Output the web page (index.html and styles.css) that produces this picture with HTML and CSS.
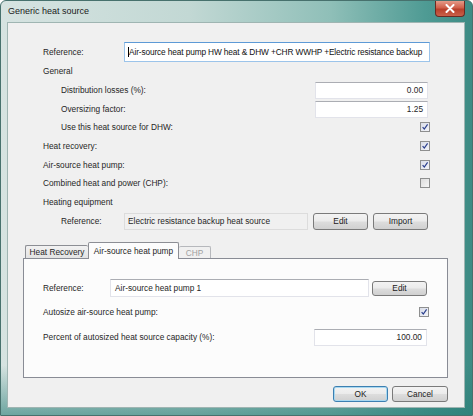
FILE: index.html
```html
<!DOCTYPE html>
<html>
<head>
<meta charset="utf-8">
<link rel="stylesheet" href="styles.css">
</head>
<body>
<div class="window">
  <div class="titlebar">
    <span class="title">Generic heat source</span>
    <div class="close"><svg width="10" height="9" viewBox="0 0 10 9"><path d="M1.5 1 L8.5 8 M8.5 1 L1.5 8" stroke="#fff" stroke-width="2" stroke-linecap="round"/></svg></div>
  </div>
  <div class="client">
    <div class="content">
      <div class="row r-ref">
        <span class="lbl lbl-ref">Reference:</span>
        <div class="input focus ref-input"><span class="caret"></span>Air-source heat pump HW heat &amp; DHW +CHR WWHP +Electric resistance backup</div>
      </div>
      <div class="row r18"><span>General</span></div>
      <div class="row r20 indent"><span>Distribution losses (%):</span><div class="input num">0.00</div></div>
      <div class="row r18 indent"><span>Oversizing factor:</span><div class="input num">1.25</div></div>
      <div class="row r18 indent"><span>Use this heat source for DHW:</span><span class="check on"><svg viewBox="0 0 8 8"><path d="M1.6 4.2 L3.3 6 L6.6 1.4" fill="none" stroke="#2b3f8e" stroke-width="1.2"/></svg></span></div>
      <div class="row r19"><span>Heat recovery:</span><span class="check on"><svg viewBox="0 0 8 8"><path d="M1.6 4.2 L3.3 6 L6.6 1.4" fill="none" stroke="#2b3f8e" stroke-width="1.2"/></svg></span></div>
      <div class="row r19"><span>Air-source heat pump:</span><span class="check on"><svg viewBox="0 0 8 8"><path d="M1.6 4.2 L3.3 6 L6.6 1.4" fill="none" stroke="#2b3f8e" stroke-width="1.2"/></svg></span></div>
      <div class="row r18"><span>Combined heat and power (CHP):</span><span class="check"></span></div>
      <div class="row r19"><span>Heating equipment</span></div>
      <div class="row r20 indent">
        <span class="lbl lbl-eq">Reference:</span>
        <div class="input readonly eq-box">Electric resistance backup heat source</div>
        <span class="btn">Edit</span>
        <span class="btn">Import</span>
      </div>
    </div>

    <div class="tabs">
      <div class="tabstrip">
        <span class="tab t-hr">Heat Recovery</span>
        <span class="tab active t-ash">Air-source heat pump</span>
        <span class="tab disabled t-chp">CHP</span>
      </div>
      <div class="pane">
        <div class="prow p-ref">
          <span class="lbl lbl-pref">Reference:</span>
          <div class="input pref-input">Air-source heat pump 1</div>
          <span class="btn">Edit</span>
        </div>
        <div class="prow p-auto"><span>Autosize air-source heat pump:</span><span class="check on"><svg viewBox="0 0 8 8"><path d="M1.6 4.2 L3.3 6 L6.6 1.4" fill="none" stroke="#2b3f8e" stroke-width="1.2"/></svg></span></div>
        <div class="prow p-pct"><span>Percent of autosized heat source capacity (%):</span><div class="input num">100.00</div></div>
      </div>
    </div>

    <div class="footer">
      <span class="btn default">OK</span>
      <span class="btn">Cancel</span>
    </div>
  </div>
</div>
</body>
</html>
```

FILE: styles.css
```css
html, body {
  margin: 0;
  padding: 0;
  background: #ffffff;
}
body {
  width: 473px;
  height: 416px;
  overflow: hidden;
  font-family: "Liberation Sans", Arial, sans-serif;
  font-size: 8.3px;
  color: #262626;
}
.window {
  box-sizing: border-box;
  width: 473px;
  height: 416px;
  display: flex;
  flex-direction: column;
  border: 1px solid #47716d;
  border-radius: 6px 6px 0 0;
  background:
    linear-gradient(to bottom, rgba(255,255,255,0) 88%, rgba(40,125,118,0.6) 100%),
    linear-gradient(to right, #d6e3e1 0%, #c2d8d4 40%, #8fbfb8 70%, #4f9b94 90%, #3d8b84 100%);
}
.titlebar {
  height: 21px;
  display: flex;
  justify-content: space-between;
  align-items: flex-start;
  flex: none;
}
.title {
  margin: 5px 0 0 7px;
  font-size: 9px;
  color: #1a1a1a;
  line-height: 11px;
}
.close {
  width: 30px;
  height: 16px;
  margin-right: 7px;
  border: 1px solid #6b2a22;
  border-top: none;
  border-radius: 0 0 4px 4px;
  background: linear-gradient(to bottom, #e49a88 0%, #d0604a 45%, #b8402b 55%, #c9614a 100%);
  display: flex;
  align-items: center;
  justify-content: center;
  box-sizing: border-box;
}
.close svg { display: block; }
.client {
  flex: 1;
  margin: 0 7px 7px 6px;
  background: #f0f0f0;
  border: 1px solid #9fb5b2;
  display: flex;
  flex-direction: column;
}
.content {
  padding: 19px 34px 0 35px;
  display: flex;
  flex-direction: column;
}
.row {
  display: flex;
  align-items: center;
  justify-content: space-between;
}
.r-ref { height: 20px; }
.r18 { height: 18px; }
.r19 { height: 19px; }
.r20 { height: 20px; }
.indent { padding-left: 18px; }
.lbl { flex: none; }
.lbl-ref { width: 81px; }
.lbl-eq { width: 63px; }
.input {
  box-sizing: border-box;
  background: #fff;
  border: 1px solid #e2e3ea;
  border-top-color: #abadb3;
  display: flex;
  align-items: center;
  padding: 0 4px;
  white-space: nowrap;
  overflow: hidden;
}
.input.focus {
  border-color: #9cc4ea;
  border-top-color: #5d9ad6;
}
.ref-input {
  flex: 1;
  height: 20px;
  padding-left: 3px;
  color: #111;
  letter-spacing: -0.12px;
}
.caret {
  width: 1px;
  height: 10px;
  background: #000;
}
.num {
  width: 113px;
  height: 17px;
  justify-content: flex-end;
  margin-right: 2px;
}
.check {
  box-sizing: border-box;
  width: 10px;
  height: 10px;
  border: 1px solid #8e8f8f;
  background: linear-gradient(135deg, #dcdcdc, #f6f6f6);
  display: flex;
  align-items: center;
  justify-content: center;
}
.check.on { background: linear-gradient(135deg, #d9dde8, #f3f4f8); }
.check svg { width: 8px; height: 8px; display: block; }
.readonly {
  background: #f0f0f0;
  border: 1px solid #dcdcdc;
  height: 17px;
  width: 184px;
  flex: none;
  padding-left: 3px;
}
.eq-box { margin-right: auto; }
.btn {
  box-sizing: border-box;
  width: 55px;
  height: 17px;
  flex: none;
  display: flex;
  align-items: center;
  justify-content: center;
  border: 1px solid #7a7a7a;
  border-radius: 3px;
  background: linear-gradient(to bottom, #f3f3f3 0%, #ebebeb 48%, #dddddd 52%, #d0d0d0 100%);
  color: #1a1a1a;
}
.r20 .btn + .btn { margin-left: 5px; margin-right: 2px; }
.tabs {
  margin: 11px 16px 0 15px;
  display: flex;
  flex-direction: column;
}
.tabstrip {
  display: flex;
  align-items: flex-end;
  height: 16px;
  padding-left: 2px;
  position: relative;
  z-index: 1;
}
.tab {
  box-sizing: border-box;
  border: 1px solid #8c8e94;
  border-bottom: none;
  border-radius: 2px 2px 0 0;
  background: linear-gradient(to bottom, #f2f2f2, #e3e3e3);
  display: flex;
  align-items: center;
  justify-content: center;
}
.t-hr { width: 63px; height: 13px; border-right: none; }
.t-ash { width: 91px; height: 17px; margin-bottom: -1px; background: #fcfcfc; }
.t-chp { width: 32px; height: 12px; border-left: none; color: #a0a0a0; background: #f0f0f0; border-color: #b6b8bc; }
.pane {
  box-sizing: border-box;
  height: 120px;
  background: #fcfcfc;
  border: 1px solid #898c95;
  padding: 20px 18px 0 19px;
  display: flex;
  flex-direction: column;
}
.prow {
  display: flex;
  align-items: center;
  justify-content: space-between;
}
.p-ref { height: 18px; }
.lbl-pref { width: 67px; }
.pref-input {
  width: 259px;
  height: 18px;
  flex: none;
  margin-right: auto;
  padding-left: 4px;
}
.p-ref .btn { height: 15px; margin-right: 2px; }
.p-auto { height: 20px; margin-top: 5px; }
.p-pct { height: 18px; margin-top: 6px; }
.footer {
  margin-top: 8px;
  padding-right: 16px;
  display: flex;
  justify-content: flex-end;
  gap: 4px;
}
.footer .btn { height: 16px; }
.footer .btn:last-child { width: 56px; }
.btn.default {
  border-color: #3c7fb1;
  box-shadow: inset 0 0 0 1px #a8d8f0;
}
```
